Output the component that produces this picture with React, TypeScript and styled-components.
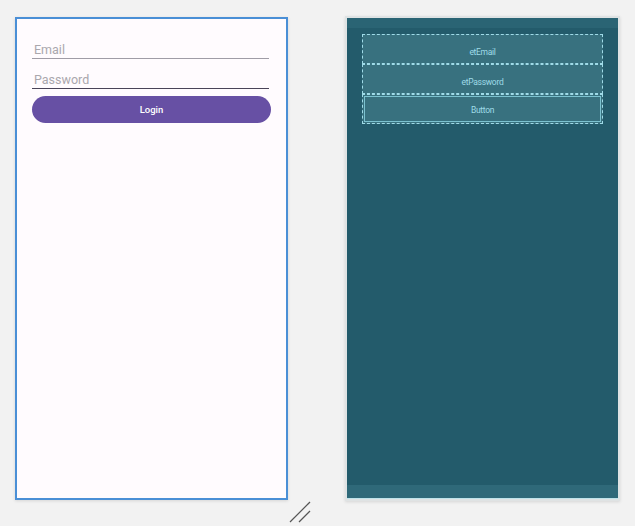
import React from 'react';
import styled, { createGlobalStyle } from 'styled-components';

const GlobalStyle = createGlobalStyle`
  html, body {
    margin: 0;
    padding: 0;
    background: #f2f2f2;
    font-family: Roboto, "Liberation Sans", sans-serif;
  }
`;

const Canvas = styled.div`
  width: 635px;
  height: 526px;
  display: flex;
  align-items: flex-start;
  padding: 17px 0 0 15px;
  box-sizing: border-box;
  gap: 57px;
  overflow: hidden;
`;

// design view (left)
const DesignFrame = styled.div`
  position: relative;
  width: 273px;
  height: 483px;
  box-sizing: border-box;
  border: 2px solid #4a8fd6;
  background: #fffbfe;
  box-shadow: 0 1px 3px rgba(0, 0, 0, 0.12);
  padding: 20px 15px 0 15px;
  display: flex;
  flex-direction: column;
`;

const Field = styled.div<{ focused?: boolean }>`
  height: 20px;
  box-sizing: border-box;
  padding: 3px 0 0 2px;
  border-bottom: 1px solid ${p => (p.focused ? '#4a4458' : '#a09ca6')};
  margin: ${p => (p.focused ? '1px' : '0')} 2px 9px 0;
  font-size: 12.5px;
  line-height: 15px;
  color: #aaa7ad;
`;

const LoginButton = styled.div`
  height: 27px;
  border-radius: 14px;
  background: #6750a4;
  color: #ffffff;
  font-size: 9.5px;
  font-weight: 500;
  display: flex;
  align-items: center;
  justify-content: center;
  margin-top: -2px;
`;

const ResizeHandle = styled.svg`
  position: absolute;
  right: -26px;
  bottom: -26px;
`;

// blueprint view (right)
const BlueprintFrame = styled.div`
  width: 275px;
  height: 485px;
  margin-top: -1px;
  box-sizing: border-box;
  border: 2px solid #dfe3e4;
  box-shadow: 0 1px 3px rgba(0, 0, 0, 0.12);
  background: #235b6b;
  display: flex;
  flex-direction: column;
`;

const StatusStrip = styled.div`
  height: 10px;
  flex-shrink: 0;
  background: #2a6474;
`;

const NavStrip = styled.div`
  height: 13px;
  flex-shrink: 0;
  margin-top: auto;
  background: #2f6979;
  border-bottom: 1px solid #bfe3ea;
`;

const Stack = styled.div`
  margin: 6px 15px 0 15px;
  display: flex;
  flex-direction: column;
`;

const BlueBox = styled.div<{ inner?: boolean }>`
  height: 30px;
  box-sizing: border-box;
  border: 1px dashed #9fdbe8;
  background: #38717f;
  color: #9fdbe8;
  font-size: 8.5px;
  letter-spacing: -0.3px;
  padding-top: ${p => (p.inner ? '1px' : '6px')};
  display: flex;
  align-items: center;
  justify-content: center;
  outline: ${p => (p.inner ? '1px solid #7cc2d0' : 'none')};
  outline-offset: -3px;
`;

export default function App() {
  return (
    <>
      <GlobalStyle />
      <Canvas>
        <DesignFrame>
          <Field>Email</Field>
          <Field focused>Password</Field>
          <LoginButton>Login</LoginButton>
          <ResizeHandle width="24" height="24" viewBox="0 0 24 24">
            <line x1="2" y1="22" x2="22" y2="2" stroke="#555" strokeWidth="1.2" />
            <line x1="11" y1="22" x2="22" y2="11" stroke="#555" strokeWidth="1.2" />
          </ResizeHandle>
        </DesignFrame>
        <BlueprintFrame>
          <StatusStrip />
          <Stack>
            <BlueBox>etEmail</BlueBox>
            <BlueBox>etPassword</BlueBox>
            <BlueBox inner>Button</BlueBox>
          </Stack>
          <NavStrip />
        </BlueprintFrame>
      </Canvas>
    </>
  );
}
